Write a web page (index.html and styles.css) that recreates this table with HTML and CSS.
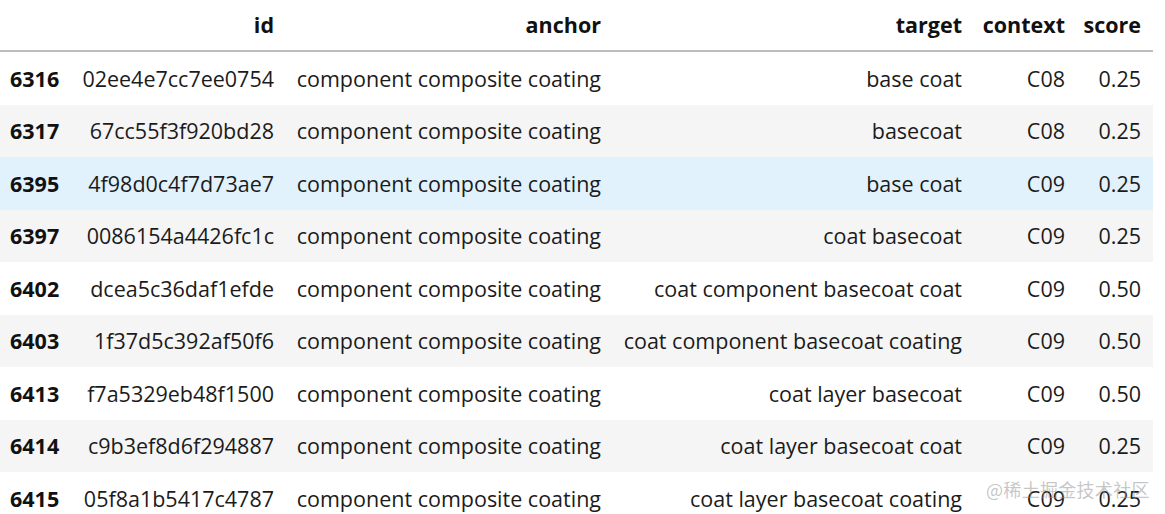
FILE: index.html
```html
<!DOCTYPE html>
<html>
<head>
<meta charset="utf-8">
<link rel="stylesheet" href="styles.css">
</head>
<body>
<div class="wrap">
<table class="df">
  <colgroup>
    <col class="c-idx"><col class="c-id"><col class="c-anchor"><col class="c-target"><col class="c-context"><col class="c-score">
  </colgroup>
  <thead>
    <tr><th class="idx"></th><th>id</th><th>anchor</th><th>target</th><th>context</th><th>score</th></tr>
  </thead>
  <tbody>
    <tr><th class="idx">6316</th><td>02ee4e7cc7ee0754</td><td>component composite coating</td><td>base coat</td><td>C08</td><td>0.25</td></tr>
    <tr><th class="idx">6317</th><td>67cc55f3f920bd28</td><td>component composite coating</td><td>basecoat</td><td>C08</td><td>0.25</td></tr>
    <tr class="hover"><th class="idx">6395</th><td>4f98d0c4f7d73ae7</td><td>component composite coating</td><td>base coat</td><td>C09</td><td>0.25</td></tr>
    <tr><th class="idx">6397</th><td>0086154a4426fc1c</td><td>component composite coating</td><td>coat basecoat</td><td>C09</td><td>0.25</td></tr>
    <tr><th class="idx">6402</th><td>dcea5c36daf1efde</td><td>component composite coating</td><td>coat component basecoat coat</td><td>C09</td><td>0.50</td></tr>
    <tr><th class="idx">6403</th><td>1f37d5c392af50f6</td><td>component composite coating</td><td>coat component basecoat coating</td><td>C09</td><td>0.50</td></tr>
    <tr><th class="idx">6413</th><td>f7a5329eb48f1500</td><td>component composite coating</td><td>coat layer basecoat</td><td>C09</td><td>0.50</td></tr>
    <tr><th class="idx">6414</th><td>c9b3ef8d6f294887</td><td>component composite coating</td><td>coat layer basecoat coat</td><td>C09</td><td>0.25</td></tr>
    <tr><th class="idx">6415</th><td>05f8a1b5417c4787</td><td>component composite coating</td><td>coat layer basecoat coating</td><td>C09</td><td>0.25</td></tr>
  </tbody>
</table>
<div class="watermark">@稀土掘金技术社区</div>
</div>
</body>
</html>
```
FILE: styles.css
```css
html, body {
  margin: 0;
  padding: 0;
  background: #fff;
  overflow: hidden;
}
.wrap {
  position: relative;
  width: 1165px;
  height: 514px;
}
.df {
  border-collapse: collapse;
  table-layout: fixed;
  width: 1153px;
  font-family: "Open Sans", "Noto Sans", sans-serif;
  font-size: 21.5px;
  color: #1b1b1b;
}
.c-idx { width: 72px; }
.c-id { width: 213px; }
.c-anchor { width: 327px; }
.c-target { width: 361px; }
.c-context { width: 103px; }
.c-score { width: 77px; }
.df th, .df td {
  text-align: right;
  padding: 0 11px 0 0;
  white-space: nowrap;
  height: 52.5px;
  line-height: 1;
  vertical-align: middle;
}
.df td:last-child, .df thead th:last-child {
  padding-right: 12px;
}
.df thead th {
  font-weight: 700;
  color: #111;
  height: 50px;
  border-bottom: 2px solid #bdbdbd;
}
.df tbody th.idx {
  font-weight: 700;
  color: #111;
  text-align: left;
  padding-left: 10px;
}
.df tbody tr:nth-child(even) {
  background: #f5f5f5;
}
.df tbody tr.hover {
  background: #e1f2fd;
}
.watermark {
  position: absolute;
  left: 986px;
  top: 476px;
  font-family: "Noto Sans CJK SC", sans-serif;
  font-size: 18px;
  color: rgba(150, 150, 150, 0.55);
  letter-spacing: 0.3px;
}
```
